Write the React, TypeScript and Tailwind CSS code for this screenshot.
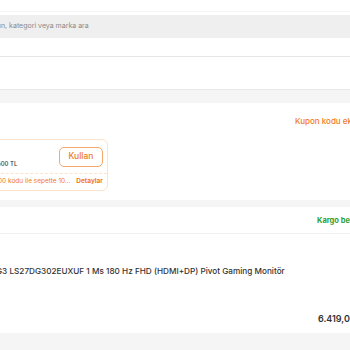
export default function App() {
  return (
    <div className="w-[350px] h-[350px] overflow-hidden bg-white font-['Inter',sans-serif]">
      {/* search header */}
      <div className="h-[12px] border-b border-[#f4f4f4]" />
      <div className="pt-[3px] pb-[18px] border-b border-[#e6e6e6]">
        <div className="h-[23px] bg-[#efefef] flex items-center overflow-hidden">
          <span className="whitespace-nowrap text-[7px] text-[#8a8a8a] -ml-[11px]">Ürün, kategori veya marka ara</span>
        </div>
      </div>
      <div className="h-[33px] border-b border-[#e8e8e8]" />
      <div className="h-[13px] bg-[#f5f5f5]" />

      {/* coupons */}
      <div className="h-[97px] bg-white pt-[12px]">
        <div className="flex overflow-hidden">
          <span className="whitespace-nowrap text-[8px] font-medium text-[#f27a1a] ml-[295px]">Kupon kodu ekle</span>
        </div>
        <div className="mt-[12px] -ml-[10px] w-[118px] h-[52px] rounded-[6px] border border-[#fde3cc] flex flex-col overflow-hidden">
          <div className="flex-1 flex items-center justify-between pl-[10px] pr-[4px] border-b border-dashed border-[#fde3cc]">
            <span className="whitespace-nowrap text-[6px] font-medium text-[#333] mt-[14px] -ml-[18px]">Min. 500 TL</span>
            <span className="w-[44px] h-[20px] rounded-[5px] border border-[#f5a86a] flex items-center justify-center text-[8.5px] font-medium text-[#f27a1a]">Kullan</span>
          </div>
          <div className="h-[16px] flex items-center justify-between pr-[4px]">
            <span className="whitespace-nowrap text-[6.5px] text-[#f27a1a] pl-[7px]">00 kodu ile sepette 10...</span>
            <span className="text-[6.5px] font-bold text-[#f27a1a]">Detaylar</span>
          </div>
        </div>
      </div>

      <div className="h-[7px] bg-[#f5f5f5]" />

      {/* product card */}
      <div className="h-[126px] bg-white">
        <div className="h-[27px] border-b border-[#f0f0f0] flex items-center overflow-hidden">
          <span className="whitespace-nowrap text-[7.5px] font-bold text-[#2f9e32] ml-[317px] mt-[2px]">Kargo bedava</span>
        </div>
        <div className="h-[99px] overflow-hidden">
          <div className="pt-[31px] whitespace-nowrap text-[8.2px] font-medium text-[#333] -ml-[4px]">
            G3 LS27DG302EUXUF 1 Ms 180 Hz FHD (HDMI+DP) Pivot Gaming Monitör
          </div>
          <div className="mt-[35px] whitespace-nowrap text-[9px] font-semibold text-[#333] ml-[318px]">6.419,00 TL</div>
        </div>
      </div>
      <div className="h-[17px] bg-[#f5f5f5]" />
    </div>
  );
}
